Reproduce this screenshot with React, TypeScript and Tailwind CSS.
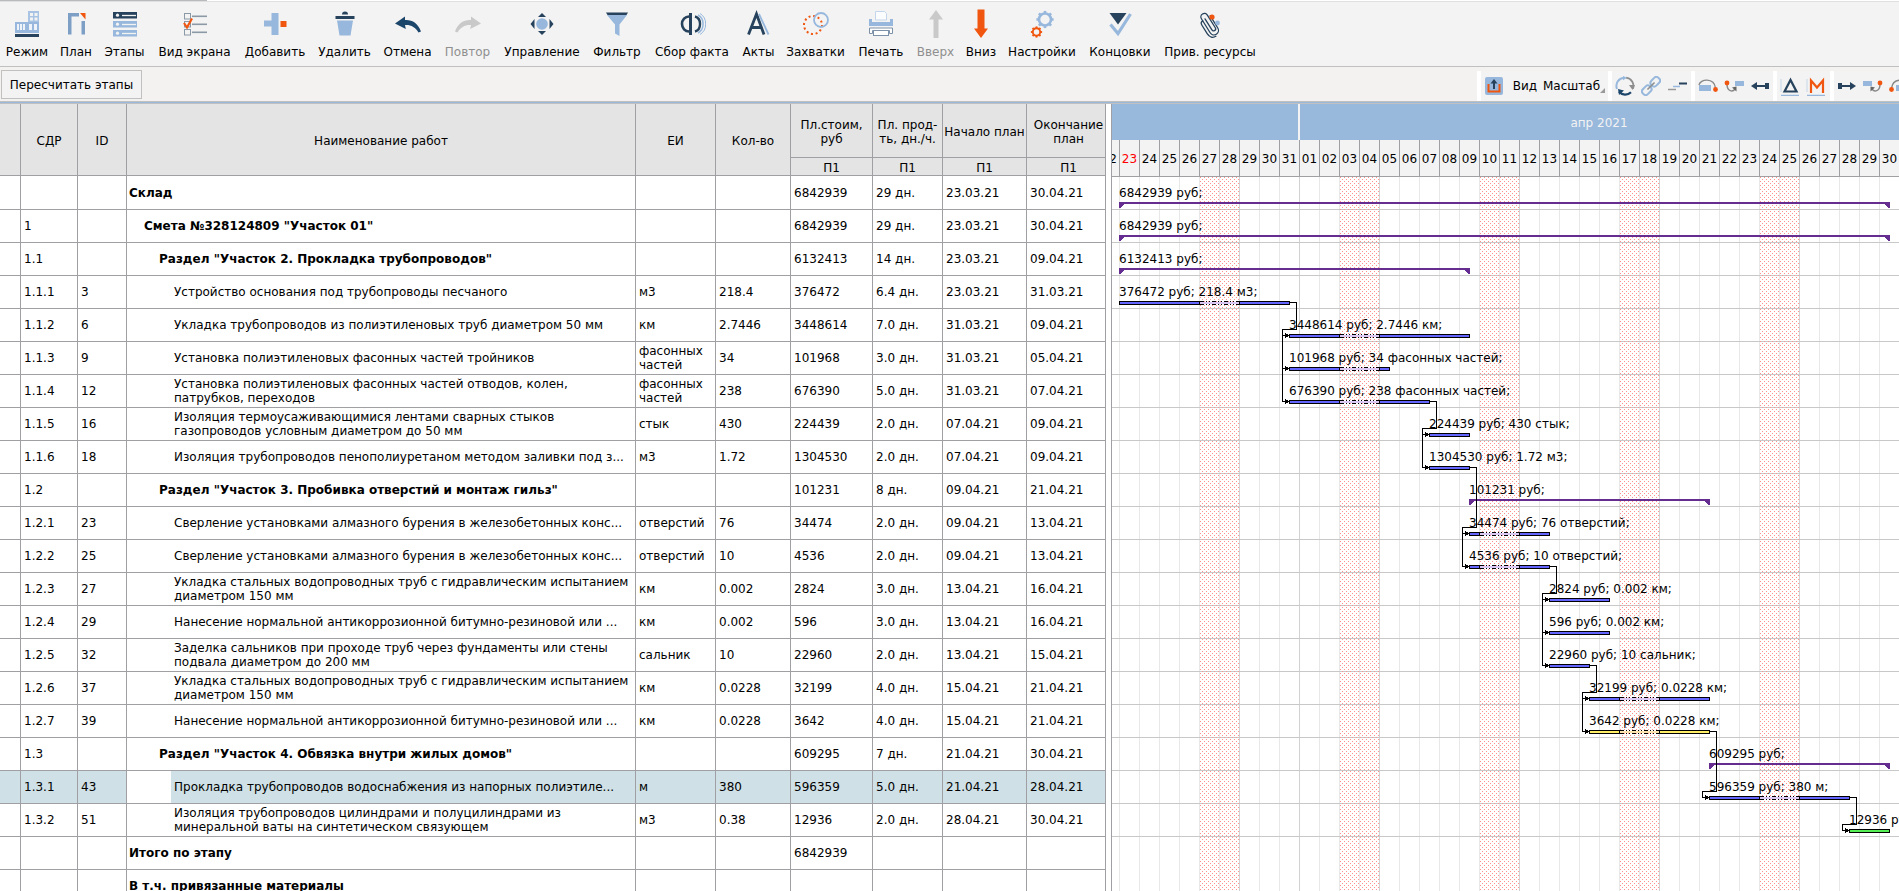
import React from "react";

const NAVY = "#26425c";
const BLUE = "#97b8dc";
const ORANGE = "#f0560f";

/* ---------- main toolbar icons ---------- */

function Icon({ children }: { children: React.ReactNode }) {
  return (
    <svg width="28" height="30" viewBox="0 0 28 30" fill="none" aria-hidden="true">
      {children}
    </svg>
  );
}

const GEAR_STEPS = [0, 45, 90, 135, 180, 225, 270, 315];

function Gear({ cx, cy, r, color, w }: { cx: number; cy: number; r: number; color: string; w: number }) {
  return (
    <g stroke={color} strokeWidth={w}>
      <circle cx={cx} cy={cy} r={r} />
      {GEAR_STEPS.map((a) => (
        <line key={a} x1={cx} y1={cy - r} x2={cx} y2={cy - r - w} transform={`rotate(${a} ${cx} ${cy})`} />
      ))}
    </g>
  );
}

const modeIcon = (
  <Icon>
    <rect x="15" y="2" width="11" height="12" fill="#a9c4e2" />
    <path d="M17 4h3v3h-3zM21.500 4h3v3h-3zM17 8.500h3v3h-3zM21.500 8.500h3v3h-3z" fill="#f3f3f3" />
    <rect x="2" y="13" width="24" height="11" fill={BLUE} />
    <path d="M4 15h2v6h-2zM7 15h2v6h-2zM10 15h2v6h-2zM16 15h3v6h-3zM21 15h3v6h-3z" fill="#eef3f9" />
    <rect x="2" y="25" width="24" height="3" fill={NAVY} />
  </Icon>
);
const planIcon = (
  <Icon>
    <path d="M6 4h11v3.500h-7.500v18H6z" fill="#7d9fc6" />
    <rect x="19.500" y="12" width="3.500" height="13.500" fill="#7d9fc6" />
    <path d="M18 4h5.500v6.500z" fill={ORANGE} />
  </Icon>
);
const stagesIcon = (
  <Icon>
    {[3, 12, 21].map((y, i) => (
      <g key={y}>
        <rect x="2" y={y} width="24" height="6.500" fill={i === 0 ? NAVY : BLUE} />
        <circle cx="6.500" cy={y + 3.2} r="1.600" fill="#f3f3f3" />
        <path d={`M11 ${y + 3.5}h14`} stroke="#f3f3f3" strokeWidth="1.300" />
      </g>
    ))}
  </Icon>
);
const viewIcon = (
  <Icon>
    {[4.5, 12.5, 20.5].map((y) => (
      <g key={y} stroke="#8b98a5">
        <rect x="3.500" y={y} width="6" height="5.500" />
        <path d={`M11 ${y + 2.8}h15`} strokeWidth="1.600" />
      </g>
    ))}
    <path d="M3 14l3 4.500l5-9" stroke={ORANGE} strokeWidth="2.200" />
  </Icon>
);
const addIcon = (
  <Icon>
    <path d="M10.500 4h7v22h-7v-8.500H3v-6h7.500z" fill={BLUE} />
    <rect x="19.500" y="12" width="6" height="6" fill={ORANGE} />
  </Icon>
);
const deleteIcon = (
  <Icon>
    <path d="M11 5.500a3 3 0 0 1 6 0z" fill={NAVY} />
    <rect x="4.500" y="7" width="19" height="3" fill={NAVY} />
    <path d="M6 11.500h16l-2.500 15h-11z" fill={BLUE} />
  </Icon>
);
const curve = "M1 14.500L11 7.500v3.500c7-.500 13 3 16 11.500l-2.500 1c-3-5.500-8-8-13.500-7.500l.800 4z";
const undoIcon = (
  <Icon>
    <path d={curve} fill="#1c456a" />
  </Icon>
);
const redoIcon = (
  <Icon>
    <g transform="translate(28 0) scale(-1 1)">
      <path d={curve} fill="#c9c9c9" />
    </g>
  </Icon>
);
const manageIcon = (
  <Icon>
    <circle cx="14" cy="15" r="5.800" fill={BLUE} />
    <path d="M14 4l4 4h-8zM14 26l4-4h-8zM2.500 15l4-5v10zM25.500 15l-4-5v10z" fill={NAVY} />
  </Icon>
);
const filterIcon = (
  <Icon>
    <path d="M4 6h20l-7.500 9.500V27l-4.500-2.500v-9z" fill={BLUE} />
    <path d="M3 3.500h22l-1.500 2.500h-19z" fill={NAVY} />
  </Icon>
);
const factIcon = (
  <Icon>
    <path d="M11 7.500a7 7.500 0 0 0 0 15" stroke={NAVY} strokeWidth="2.600" />
    <path d="M12.500 4v22" stroke={NAVY} strokeWidth="3" />
    <path d="M17 7.500a6.500 7.700 0 0 1 0 15" stroke={NAVY} strokeWidth="2.400" />
    <path d="M20 6a9 10 0 0 1 0 18" stroke={BLUE} strokeWidth="1.500" />
    <path d="M22 4.500a11 12 0 0 1 0 21" stroke={BLUE} />
  </Icon>
);
const actsIcon = (
  <Icon>
    <path d="M3.500 25.500L11.500 5l7.500 20.500M6 18.500h10.500" stroke={NAVY} strokeWidth="2.800" />
    <path d="M14 5l9.500 20.500" stroke={BLUE} strokeWidth="1.800" />
  </Icon>
);
const gripIcon = (
  <Icon>
    <circle cx="11" cy="16" r="9" stroke={ORANGE} strokeWidth="2" strokeDasharray="2 2.700" />
    <circle cx="19" cy="11" r="7" stroke={BLUE} strokeWidth="1.800" />
  </Icon>
);
const printIcon = (
  <Icon>
    <path d="M8.500 11V2.500h9l2 2V11z" fill="#fafcfe" stroke="#c5d6e8" />
    <path d="M2 10h3v3h18v-3h3v7H2z" fill={BLUE} />
    <path d="M2.500 19h23v5.500h-3V21.500h-17v3h-3z" fill="#fff" stroke="#7d91a8" />
    <rect x="6.500" y="21.500" width="15" height="5" fill="#fff" stroke="#7d91a8" />
  </Icon>
);
const upIcon = (
  <Icon>
    <path d="M14 1l7 9.500h-4.500V29h-5V10.500H7z" fill="#c9c9c9" />
  </Icon>
);
const downIcon = (
  <Icon>
    <path d="M14 29l7-9.500h-3.500V.500h-7v19H7z" fill={ORANGE} />
  </Icon>
);
const settingsIcon = (
  <Icon>
    <Gear cx={17} cy={10.5} r={6} color={BLUE} w={2.6} />
    <Gear cx={8.5} cy={23} r={3.7} color={ORANGE} w={1.9} />
  </Icon>
);
const endingsIcon = (
  <Icon>
    <path d="M3.500 4h17l-8.500 11.500z" fill={NAVY} />
    <path d="M4.500 15.500l7.500 9L24.500 5" stroke={BLUE} strokeWidth="3.200" />
  </Icon>
);
const clipIcon = (
  <Icon>
    <g transform="rotate(-32 14 15)" stroke={NAVY} strokeWidth="1.300" strokeLinecap="round">
      <path d="M18.500 8v14.500a4.500 4.500 0 0 1-9 0V6a3.500 3.500 0 0 1 7 0v15a2 2 0 0 1-4 0V8" />
      <path d="M9.500 8.500c-2 0-3 1-3 3V22c0 4 2.500 6.500 6 6.500" />
    </g>
    <circle cx="16" cy="8" r="2.600" fill={ORANGE} />
    <circle cx="21.500" cy="14" r="2.400" fill={BLUE} />
  </Icon>
);

const TOOLS: { label: string; width: string; icon: React.ReactNode; disabled?: boolean }[] = [
  { label: "Режим", width: "w-[54px]", icon: modeIcon },
  { label: "План", width: "w-[44px]", icon: planIcon },
  { label: "Этапы", width: "w-[53px]", icon: stagesIcon },
  { label: "Вид экрана", width: "w-[87px]", icon: viewIcon },
  { label: "Добавить", width: "w-[74px]", icon: addIcon },
  { label: "Удалить", width: "w-[65px]", icon: deleteIcon },
  { label: "Отмена", width: "w-[61px]", icon: undoIcon },
  { label: "Повтор", width: "w-[59px]", icon: redoIcon, disabled: true },
  { label: "Управление", width: "w-[90px]", icon: manageIcon },
  { label: "Фильтр", width: "w-[60px]", icon: filterIcon },
  { label: "Сбор факта", width: "w-[90px]", icon: factIcon },
  { label: "Акты", width: "w-[43px]", icon: actsIcon },
  { label: "Захватки", width: "w-[71px]", icon: gripIcon },
  { label: "Печать", width: "w-[60px]", icon: printIcon },
  { label: "Вверх", width: "w-[49px]", icon: upIcon, disabled: true },
  { label: "Вниз", width: "w-[42px]", icon: downIcon },
  { label: "Настройки", width: "w-[80px]", icon: settingsIcon },
  { label: "Концовки", width: "w-[76px]", icon: endingsIcon },
  { label: "Прив. ресурсы", width: "w-[104px]", icon: clipIcon },
];

/* ---------- chart toolbar ---------- */

function Small({ label, children }: { label: string; children: React.ReactNode }) {
  return (
    <button type="button" aria-label={label} className="flex h-full w-[26px] shrink-0 items-center justify-center">
      <svg width="20" height="20" viewBox="0 0 20 20" fill="none" aria-hidden="true">
        {children}
      </svg>
    </button>
  );
}

function Divider() {
  return <span className="h-[30px] w-1 shrink-0 bg-white" />;
}

function ChartTools() {
  return (
    <div className="flex h-[30px] w-[422px] shrink-0 items-center self-end overflow-hidden bg-[#f3f3f3]">
      <Divider />
      <Small label="Экспорт">
        <rect x="1" y="1" width="18" height="18" rx="2" fill={BLUE} />
        <path d="M4.500 8v7.500h11V8" stroke={ORANGE} strokeWidth="2" />
        <path d="M10 13V6" stroke={NAVY} strokeWidth="2" />
        <path d="M10 3l3.500 4.500h-7z" fill={NAVY} />
      </Small>
      <button type="button" className="ml-1 w-[28px] shrink-0 text-[12px] leading-[14px]">
        Вид
      </button>
      <button type="button" className="ml-1 flex w-[65px] shrink-0 items-center text-[12px] leading-[14px]">
        Масштаб
        <svg width="5" height="5" viewBox="0 0 5 5" className="mt-2 shrink-0" aria-hidden="true">
          <path d="M5 0v5H0z" fill="#999" />
        </svg>
      </button>
      <Divider />
      <Small label="Обновить">
        <path d="M2 13a8.300 8.300 0 0 1 7-11.300" stroke={BLUE} strokeWidth="2" />
        <path d="M11 1.700a8.300 8.300 0 0 1 7 11" stroke="#8e8e8e" strokeWidth="1.800" />
        <path d="M16 16.300a8.300 8.300 0 0 1-12-.500" stroke="#1c456a" strokeWidth="2.200" />
        <path d="M8 0l4 1.800l-4 2.500z" fill={BLUE} />
        <path d="M14 9h6l-2.500 5z" fill="#8e8e8e" />
        <path d="M3 13l6 1.500L4 19z" fill="#1c456a" />
      </Small>
      <Small label="Связать">
        <g transform="rotate(-45 10 10)" strokeWidth="2">
          <rect x="11" y="6.500" width="10" height="7" rx="3" stroke={BLUE} />
          <rect x="-1" y="6.500" width="10" height="7" rx="3" stroke={BLUE} />
          <path d="M5 10h10" stroke="#8e8e8e" strokeWidth="1.600" />
        </g>
      </Small>
      <Small label="Ступени">
        <path d="M1 13.500h8" stroke="#999" strokeWidth="1.500" />
        <path d="M6 10.500h7" stroke={BLUE} strokeWidth="1.500" />
        <path d="M12 7.500h8" stroke={NAVY} strokeWidth="2" />
      </Small>
      <span className="w-px shrink-0" />
      <Divider />
      <Small label="Связь сверху">
        <path d="M1 9C2 3 16 1 17.500 12" stroke="#888" strokeWidth="1.400" />
        <rect x="1" y="9" width="12" height="6" fill={BLUE} />
        <circle cx="17.500" cy="13.500" r="2.400" fill={ORANGE} />
      </Small>
      <Small label="Связь слева">
        <path d="M3 8c0 8 6 8 8 5" stroke="#888" strokeWidth="1.400" />
        <path d="M8 11.500l4.500-1v5z" fill="#666" />
        <circle cx="3" cy="7" r="2.400" fill={ORANGE} />
        <rect x="11" y="5" width="9" height="5" fill={BLUE} />
      </Small>
      <Small label="Сдвинуть влево">
        <path d="M1 10l6-4v8z" fill={NAVY} />
        <path d="M5 10h13" stroke={NAVY} strokeWidth="2" />
        <rect x="15" y="7" width="4" height="6" fill={NAVY} />
      </Small>
      <Divider />
      <Small label="Дельта">
        <path d="M1 3v13" stroke="#c5d6e8" />
        <path d="M4.500 15.500L10.500 4l6 11.500z" stroke={NAVY} strokeWidth="2.200" />
        <path d="M1 19.500h18" stroke={BLUE} strokeWidth="1.500" />
      </Small>
      <Small label="Материалы">
        <path d="M1 3v13" stroke="#c5d6e8" />
        <path d="M5 17V4.500l6 7l6-7V17" stroke={ORANGE} strokeWidth="2.200" />
        <path d="M1 19.500h18" stroke={BLUE} strokeWidth="1.500" />
      </Small>
      <span className="w-px shrink-0" />
      <Divider />
      <Small label="Сдвинуть вправо">
        <path d="M19 10l-6-4v8z" fill={NAVY} />
        <path d="M2 10h13" stroke={NAVY} strokeWidth="2" />
        <rect x="1" y="7" width="4" height="6" fill={NAVY} />
      </Small>
      <Small label="Связь справа">
        <path d="M17 8c0 8-6 8-8 5" stroke="#888" strokeWidth="1.400" />
        <path d="M12 11.500l-4.500-1v5z" fill="#666" />
        <circle cx="17" cy="7" r="2.400" fill={ORANGE} />
        <rect x="0" y="5" width="9" height="5" fill={BLUE} />
      </Small>
      <Small label="Связь снизу">
        <path d="M19 9C18 3 4 1 2.500 12" stroke="#888" strokeWidth="1.400" />
        <rect x="7" y="9" width="12" height="6" fill={BLUE} />
        <circle cx="2.500" cy="13.500" r="2.400" fill={ORANGE} />
      </Small>
    </div>
  );
}

/* ---------- data ---------- */

type Row = {
  wbs?: string;
  id?: string;
  name: string;
  level: number;
  unit?: string;
  qty?: string;
  cost?: string;
  dur?: string;
  start?: string;
  end?: string;
  selected?: boolean;
};

const ROWS: Row[] = [
  { name: "Склад", level: 0, cost: "6842939", dur: "29 дн.", start: "23.03.21", end: "30.04.21" },
  { wbs: "1", name: 'Смета №328124809 "Участок 01"', level: 1, cost: "6842939", dur: "29 дн.", start: "23.03.21", end: "30.04.21" },
  { wbs: "1.1", name: 'Раздел "Участок 2. Прокладка трубопроводов"', level: 2, cost: "6132413", dur: "14 дн.", start: "23.03.21", end: "09.04.21" },
  { wbs: "1.1.1", id: "3", name: "Устройство основания под трубопроводы песчаного", level: 3, unit: "м3", qty: "218.4", cost: "376472", dur: "6.4 дн.", start: "23.03.21", end: "31.03.21" },
  { wbs: "1.1.2", id: "6", name: "Укладка трубопроводов из полиэтиленовых труб диаметром 50 мм", level: 3, unit: "км", qty: "2.7446", cost: "3448614", dur: "7.0 дн.", start: "31.03.21", end: "09.04.21" },
  { wbs: "1.1.3", id: "9", name: "Установка полиэтиленовых фасонных частей тройников", level: 3, unit: "фасонных\nчастей", qty: "34", cost: "101968", dur: "3.0 дн.", start: "31.03.21", end: "05.04.21" },
  { wbs: "1.1.4", id: "12", name: "Установка полиэтиленовых фасонных частей отводов, колен,\nпатрубков, переходов", level: 3, unit: "фасонных\nчастей", qty: "238", cost: "676390", dur: "5.0 дн.", start: "31.03.21", end: "07.04.21" },
  { wbs: "1.1.5", id: "16", name: "Изоляция термоусаживающимися лентами сварных стыков\nгазопроводов условным диаметром до 50 мм", level: 3, unit: "стык", qty: "430", cost: "224439", dur: "2.0 дн.", start: "07.04.21", end: "09.04.21" },
  { wbs: "1.1.6", id: "18", name: "Изоляция трубопроводов пенополиуретаном методом заливки под з...", level: 3, unit: "м3", qty: "1.72", cost: "1304530", dur: "2.0 дн.", start: "07.04.21", end: "09.04.21" },
  { wbs: "1.2", name: 'Раздел "Участок 3. Пробивка отверстий и монтаж гильз"', level: 2, cost: "101231", dur: "8 дн.", start: "09.04.21", end: "21.04.21" },
  { wbs: "1.2.1", id: "23", name: "Сверление установками алмазного бурения в железобетонных конс...", level: 3, unit: "отверстий", qty: "76", cost: "34474", dur: "2.0 дн.", start: "09.04.21", end: "13.04.21" },
  { wbs: "1.2.2", id: "25", name: "Сверление установками алмазного бурения в железобетонных конс...", level: 3, unit: "отверстий", qty: "10", cost: "4536", dur: "2.0 дн.", start: "09.04.21", end: "13.04.21" },
  { wbs: "1.2.3", id: "27", name: "Укладка стальных водопроводных труб с гидравлическим испытанием\nдиаметром 150 мм", level: 3, unit: "км", qty: "0.002", cost: "2824", dur: "3.0 дн.", start: "13.04.21", end: "16.04.21" },
  { wbs: "1.2.4", id: "29", name: "Нанесение нормальной антикоррозионной битумно-резиновой или ...", level: 3, unit: "км", qty: "0.002", cost: "596", dur: "3.0 дн.", start: "13.04.21", end: "16.04.21" },
  { wbs: "1.2.5", id: "32", name: "Заделка сальников при проходе труб через фундаменты или стены\nподвала диаметром до 200 мм", level: 3, unit: "сальник", qty: "10", cost: "22960", dur: "2.0 дн.", start: "13.04.21", end: "15.04.21" },
  { wbs: "1.2.6", id: "37", name: "Укладка стальных водопроводных труб с гидравлическим испытанием\nдиаметром 150 мм", level: 3, unit: "км", qty: "0.0228", cost: "32199", dur: "4.0 дн.", start: "15.04.21", end: "21.04.21" },
  { wbs: "1.2.7", id: "39", name: "Нанесение нормальной антикоррозионной битумно-резиновой или ...", level: 3, unit: "км", qty: "0.0228", cost: "3642", dur: "4.0 дн.", start: "15.04.21", end: "21.04.21" },
  { wbs: "1.3", name: 'Раздел "Участок 4. Обвязка внутри жилых домов"', level: 2, cost: "609295", dur: "7 дн.", start: "21.04.21", end: "30.04.21" },
  { wbs: "1.3.1", id: "43", name: "Прокладка трубопроводов водоснабжения из напорных полиэтиле...", level: 3, unit: "м", qty: "380", cost: "596359", dur: "5.0 дн.", start: "21.04.21", end: "28.04.21", selected: true },
  { wbs: "1.3.2", id: "51", name: "Изоляция трубопроводов цилиндрами и полуцилиндрами из\nминеральной ваты на синтетическом связующем", level: 3, unit: "м3", qty: "0.38", cost: "12936", dur: "2.0 дн.", start: "28.04.21", end: "30.04.21" },
  { name: "Итого по этапу", level: 0, cost: "6842939" },
  { name: "В т.ч. привязанные материалы", level: 0 },
];

const INDENT = ["pl-[2px]", "pl-[17px]", "pl-[32px]", "pl-[3px] ml-[44px]"];
const CELL = "border-r border-b border-[#a0a0a4] p-0 pl-[3px] text-left font-normal whitespace-pre";
const HEAD = "border-r border-b border-[#a0a0a4] p-0 pt-[2px] text-center font-normal whitespace-nowrap";

function WorkTable() {
  return (
    <div className="w-[1106px] shrink-0 overflow-hidden border-r border-[#a0a0a4]">
      <table className="w-[1111px] table-fixed border-separate border-spacing-0 text-[12px] leading-[14px]">
        <colgroup>
          <col className="w-[21px]" />
          <col className="w-[57px]" />
          <col className="w-[49px]" />
          <col className="w-[509px]" />
          <col className="w-[80px]" />
          <col className="w-[75px]" />
          <col className="w-[82px]" />
          <col className="w-[70px]" />
          <col className="w-[84px]" />
          <col className="w-[84px]" />
        </colgroup>
        <thead className="bg-[#e4e4e4]">
          <tr className="h-[54px]">
            <th rowSpan={2} className={HEAD} />
            <th rowSpan={2} className={HEAD}>СДР</th>
            <th rowSpan={2} className={HEAD}>ID</th>
            <th rowSpan={2} className={HEAD}>Наименование работ</th>
            <th rowSpan={2} className={HEAD}>ЕИ</th>
            <th rowSpan={2} className={HEAD}>Кол-во</th>
            <th className={HEAD}>Пл.стоим,<br />руб</th>
            <th className={HEAD}>Пл. прод-<br />ть, дн./ч.</th>
            <th className={HEAD}>Начало план</th>
            <th className={HEAD}>Окончание<br />план</th>
          </tr>
          <tr className="h-[18px]">
            <th className={HEAD}>П1</th>
            <th className={HEAD}>П1</th>
            <th className={HEAD}>П1</th>
            <th className={HEAD}>П1</th>
          </tr>
        </thead>
        <tbody>
          {ROWS.map((r, i) => {
            const tint = r.selected ? "bg-[#cfe0e6]" : "";
            return (
              <tr key={i} className={i === 0 ? "h-[34px]" : "h-[33px]"}>
                <td className={`${CELL} ${tint}`} />
                <td className={`${CELL} ${tint}`}>{r.wbs}</td>
                <td className={`${CELL} ${tint}`}>{r.id}</td>
                <td className="overflow-hidden border-r border-b border-[#a0a0a4] p-0 whitespace-pre">
                  <div
                    className={`flex items-center ${INDENT[r.level]} ${r.level < 3 ? "font-bold" : ""} ${
                      r.selected ? "h-8 bg-[#cfe0e6]" : ""
                    }`}
                  >
                    {r.name}
                  </div>
                </td>
                <td className={`${CELL} ${tint}`}>{r.unit}</td>
                <td className={`${CELL} ${tint}`}>{r.qty}</td>
                <td className={`${CELL} ${tint}`}>{r.cost}</td>
                <td className={`${CELL} ${tint}`}>{r.dur}</td>
                <td className={`${CELL} ${tint}`}>{r.start}</td>
                <td className={`${CELL} ${tint}`}>{r.end}</td>
              </tr>
            );
          })}
        </tbody>
      </table>
    </div>
  );
}

/* ---------- gantt chart ---------- */

const DAY = 20;
const ORIGIN = 7; // x of 23 March
const BODY_H = 1400;

const DAYS = [
  ...Array.from({ length: 9 }, (_, i) => 23 + i),
  ...Array.from({ length: 30 }, (_, i) => 1 + i),
];
const WEEKENDS = [4, 11, 18, 25, 32];

const X = (d: number) => ORIGIN + d * DAY;
const bottom = (row: number) => 32 + row * 33;

type Task = { row: number; from: number; to: number; label: string; kind?: "sum" | "yellow" | "green" };

const TASKS: Task[] = [
  { row: 0, from: 0, to: 38.5, label: "6842939 руб;", kind: "sum" },
  { row: 1, from: 0, to: 38.5, label: "6842939 руб;", kind: "sum" },
  { row: 2, from: 0, to: 17.5, label: "6132413 руб;", kind: "sum" },
  { row: 3, from: 0, to: 8.5, label: "376472 руб; 218.4 м3;" },
  { row: 4, from: 8.5, to: 17.5, label: "3448614 руб; 2.7446 км;" },
  { row: 5, from: 8.5, to: 13.5, label: "101968 руб; 34 фасонных частей;" },
  { row: 6, from: 8.5, to: 15.5, label: "676390 руб; 238 фасонных частей;" },
  { row: 7, from: 15.5, to: 17.5, label: "224439 руб; 430 стык;" },
  { row: 8, from: 15.5, to: 17.5, label: "1304530 руб; 1.72 м3;" },
  { row: 9, from: 17.5, to: 29.5, label: "101231 руб;", kind: "sum" },
  { row: 10, from: 17.5, to: 21.5, label: "34474 руб; 76 отверстий;" },
  { row: 11, from: 17.5, to: 21.5, label: "4536 руб; 10 отверстий;" },
  { row: 12, from: 21.5, to: 24.5, label: "2824 руб; 0.002 км;" },
  { row: 13, from: 21.5, to: 24.5, label: "596 руб; 0.002 км;" },
  { row: 14, from: 21.5, to: 23.5, label: "22960 руб; 10 сальник;" },
  { row: 15, from: 23.5, to: 29.5, label: "32199 руб; 0.0228 км;" },
  { row: 16, from: 23.5, to: 29.5, label: "3642 руб; 0.0228 км;", kind: "yellow" },
  { row: 17, from: 29.5, to: 38.5, label: "609295 руб;", kind: "sum" },
  { row: 18, from: 29.5, to: 36.5, label: "596359 руб; 380 м;" },
  { row: 19, from: 36.5, to: 38.5, label: "12936 руб; 0.38 м3;", kind: "green" },
];

const LINKS: { row: number; at: number; targets: number[] }[] = [
  { row: 3, at: 8.5, targets: [4, 5, 6] },
  { row: 6, at: 15.5, targets: [7, 8] },
  { row: 8, at: 17.5, targets: [10, 11] },
  { row: 11, at: 21.5, targets: [12, 13, 14] },
  { row: 14, at: 23.5, targets: [15, 16] },
  { row: 16, at: 29.5, targets: [18] },
  { row: 18, at: 36.5, targets: [19] },
];

function Bar({ t }: { t: Task }) {
  const x1 = X(t.from);
  const x2 = X(t.to) + 1;
  const b = bottom(t.row);
  if (t.kind === "sum") {
    return <path d={`M${x1} ${b - 7}H${x2}v6h-1l-5 -4H${x1 + 6}l-5 4h-1z`} fill="#662d91" />;
  }
  const fill = t.kind === "yellow" ? "#ffee66" : t.kind === "green" ? "#55ee55" : "#6464ff";
  const pale = t.kind === "yellow" ? "#ffe2ac" : "#dcc8f4";
  const parts: { a: number; z: number; off: boolean }[] = [];
  let cur = x1;
  WEEKENDS.forEach((w) => {
    const a = X(w);
    const z = X(w + 2);
    if (a > x1 && z < x2) {
      parts.push({ a: cur, z: a + 1, off: false }, { a: a + 1, z, off: true });
      cur = z;
    }
  });
  parts.push({ a: cur, z: x2, off: false });
  return (
    <g>
      {parts.map((p) =>
        p.off ? (
          <g key={p.a}>
            <rect x={p.a} y={b - 6} width={p.z - p.a} height="2" fill={pale} />
            <path d={`M${p.a} ${b - 6.5}H${p.z}M${p.a} ${b - 3.5}H${p.z}`} stroke="#000" strokeDasharray="4 2 1 2 1 2" />
          </g>
        ) : (
          <g key={p.a}>
            <rect x={p.a} y={b - 7} width={p.z - p.a} height="4" fill="#000" />
            <rect x={p.a + 1} y={b - 6} width={p.z - p.a - 2} height="2" fill={fill} />
          </g>
        ),
      )}
    </g>
  );
}

function Gantt() {
  return (
    <div className="flex min-w-0 flex-1 flex-col overflow-hidden border-l border-[#a0a0a4] bg-white">
      <div className="flex h-[36px] shrink-0 bg-[#98b8dc] text-[12px] text-[#f3f3f3]">
        <div className="w-[188px] shrink-0 border-r-2 border-[#f3f3f3]" />
        <div className="flex w-[598px] shrink-0 items-center justify-center pt-[2px]">апр 2021</div>
      </div>
      <div className="flex h-[37px] shrink-0 border-b border-[#a0a0a4] bg-[#f3f3f3] text-[12px]">
        <div className="flex w-[7px] shrink-0 items-center justify-end overflow-hidden pt-[2px]">
          <span className="pr-[2px]">22</span>
        </div>
        {DAYS.map((d, i) => (
          <div
            key={i}
            className={`flex w-5 shrink-0 items-center justify-center border-l border-[#a0a0a4] pt-[2px] ${i === 0 ? "text-[#ff0000]" : ""}`}
          >
            {String(d).padStart(2, "0")}
          </div>
        ))}
      </div>
      <svg className="block w-full shrink-0" height={BODY_H} fontSize="12" shapeRendering="crispEdges">
        <title>Диаграмма Ганта</title>
        <defs>
          <pattern id="off" width="4" height="4" patternUnits="userSpaceOnUse">
            <rect x="0" y="0" width="1" height="1" fill="#ff9090" />
            <rect x="2" y="2" width="1" height="1" fill="#ff9090" />
          </pattern>
        </defs>
        {DAYS.map((_, i) => (
          <rect key={i} x={X(i)} y="0" width="1" height={BODY_H} fill={i % 7 === 6 || i === 9 ? "#d2d2d2" : "#e8e8e8"} />
        ))}
        {ROWS.slice(0, 20).map((_, i) => (
          <rect key={i} x="0" y={bottom(i)} width="100%" height="1" fill="#c8c8c8" />
        ))}
        {WEEKENDS.map((w) => (
          <rect key={w} x={X(w)} y="0" width={2 * DAY} height={BODY_H} fill="url(#off)" />
        ))}
        {TASKS.map((t) => (
          <text key={t.row} x={X(t.from)} y={bottom(t.row) - 12} fill="#000">
            {t.label}
          </text>
        ))}
        {TASKS.map((t) => (
          <Bar key={t.row} t={t} />
        ))}
        {LINKS.map((l) => {
          const x = X(l.at);
          const y0 = bottom(l.row) - 5.5;
          const yb = bottom(l.targets[0]) - 11.5;
          const yl = bottom(l.targets[l.targets.length - 1]) - 5.5;
          return (
            <g key={l.row}>
              <path d={`M${x} ${y0}H${x + 7.5}V${yb}H${x - 6.5}V${yl}`} stroke="#000" fill="none" />
              {l.targets.map((n) => {
                const y = bottom(n) - 5.5;
                return (
                  <g key={n}>
                    <path d={`M${x - 7} ${y}H${x}`} stroke="#000" />
                    <path d={`M${x - 4} ${y - 2.5}v5l3.500 -2v-1z`} fill="#000" />
                  </g>
                );
              })}
            </g>
          );
        })}
      </svg>
    </div>
  );
}

/* ---------- page ---------- */

export default function App() {
  return (
    <div className="flex h-screen flex-col overflow-hidden bg-white font-['DejaVu_Sans',Verdana,sans-serif] text-black">
      <div className="h-px w-[207px] shrink-0 bg-[#b8babc]" />
      <header className="flex h-[66px] shrink-0 border-t border-b border-t-[#e0e0e0] border-b-[#c0c0c0] bg-[#f3f3f3]">
        {TOOLS.map((t) => (
          <button
            key={t.label}
            type="button"
            disabled={t.disabled}
            className={`flex shrink-0 flex-col items-center pt-[7px] text-[12px] leading-[14px] whitespace-nowrap ${t.width} ${
              t.disabled ? "text-[#8f8f8f]" : ""
            }`}
          >
            {t.icon}
            <span className="mt-[6px]">{t.label}</span>
          </button>
        ))}
      </header>
      <div className="flex h-[34px] shrink-0 items-center justify-between bg-[#f3f2f1]">
        <button type="button" className="ml-px h-[29px] w-[141px] border border-[#c0c0c0] bg-[#f3f3f3] pt-[2px] text-[12px] leading-[14px] whitespace-nowrap">
          Пересчитать этапы
        </button>
        <ChartTools />
      </div>
      <div className="h-[3px] shrink-0 border-y border-[#c0c0c0] bg-[#98b8dc]" />
      <main className="flex min-h-0 flex-1 gap-[5px]">
        <WorkTable />
        <Gantt />
      </main>
    </div>
  );
}
